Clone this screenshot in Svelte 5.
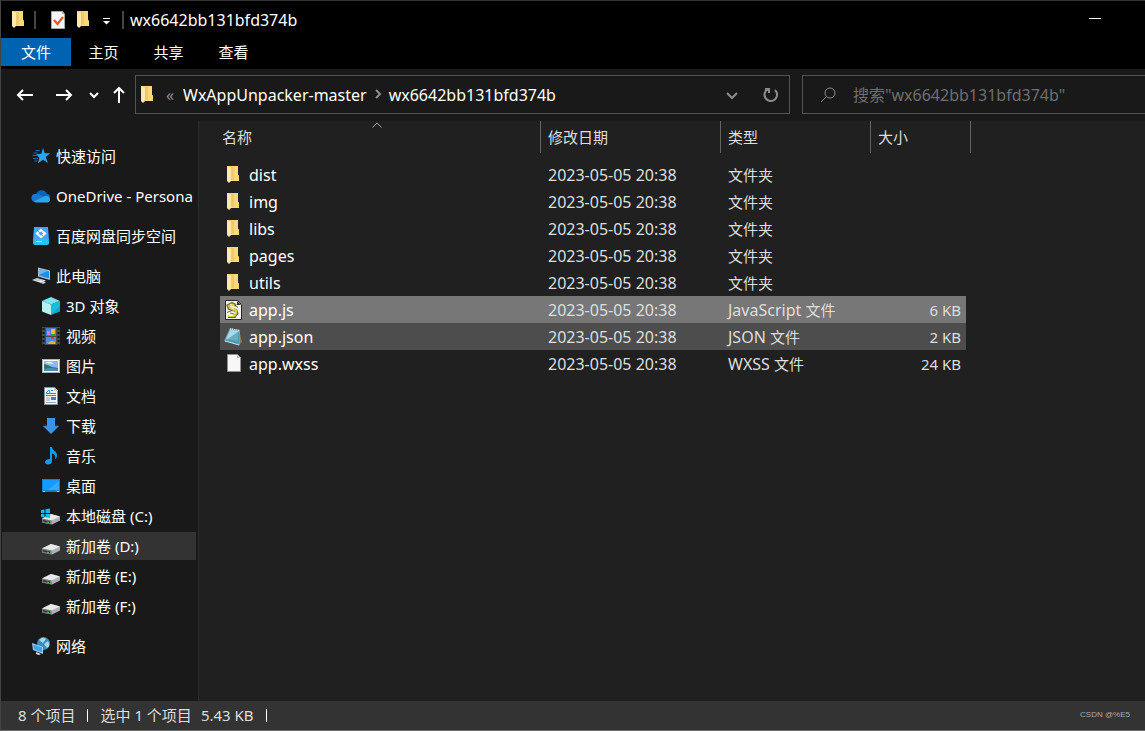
<script>
  const places = [
    { icon: 'star', label: '快速访问', top: true },
    { icon: 'cloud', label: 'OneDrive - Persona', top: true },
    { icon: 'sync', label: '百度网盘同步空间', top: true },
    { icon: 'pc', label: '此电脑', top: true },
    { icon: 'cube', label: '3D 对象' },
    { icon: 'video', label: '视频' },
    { icon: 'picture', label: '图片' },
    { icon: 'doc', label: '文档' },
    { icon: 'download', label: '下载' },
    { icon: 'music', label: '音乐' },
    { icon: 'desktop', label: '桌面' },
    { icon: 'sysdrive', label: '本地磁盘 (C:)' },
    { icon: 'drive', label: '新加卷 (D:)', active: true },
    { icon: 'drive', label: '新加卷 (E:)' },
    { icon: 'drive', label: '新加卷 (F:)' },
    { icon: 'network', label: '网络', top: true }
  ];
  const date = '2023-05-05 20:38';
  const files = [
    { icon: 'folder', name: 'dist', type: '文件夹', size: '' },
    { icon: 'folder', name: 'img', type: '文件夹', size: '' },
    { icon: 'folder', name: 'libs', type: '文件夹', size: '' },
    { icon: 'folder', name: 'pages', type: '文件夹', size: '' },
    { icon: 'folder', name: 'utils', type: '文件夹', size: '' },
    { icon: 'js', name: 'app.js', kind: 'JavaScript', type: '文件', size: '6 KB', state: 'selected' },
    { icon: 'json', name: 'app.json', kind: 'JSON', type: '文件', size: '2 KB', state: 'hover' },
    { icon: 'file', name: 'app.wxss', kind: 'WXSS', type: '文件', size: '24 KB' }
  ];
</script>

{#snippet icon(name)}
  <svg class="icon" width="20" height="20" viewBox="0 0 20 20" aria-hidden="true">
    {#if name === 'folder'}
      <path d="M4 1h11v9l1 1v5H4z" fill="#f7d571" />
      <path d="M8 1h7v9l1 1v5H8z" fill="#fbd878" />
      <path d="M8 2h3v13H8z" fill="#efca68" />
      <path d="M4 1l4 2v13l-2 2-2-2z" fill="#ffe9a6" />
    {:else if name === 'star'}
      <path d="M12 2l1.800 5.300 5.400-.100-4.500 3.700 2.300 6.100-4.900-3.200L7 17.300l1.300-5.500L5 8.200l5.300-.500z" fill="#2ba3ee" />
      <path d="M4.500 4.500h4.500M2.500 7h4M1.500 9.500h5M2 12.500h5M3.500 15h3" stroke="#1c6aa3" stroke-width="1" />
    {:else if name === 'cloud'}
      <path d="M5 8a6 6 0 0 1 11-.500 5 5 0 0 1 3.500 3L9 13z" fill="#0864b8" />
      <path d="M4 16a4 4 0 0 1 .800-8 6 6 0 0 1 5 1.300l6 5z" fill="#1479d1" />
      <path d="M3 15.500l10-5.200a4 4 0 0 1 3-.300 3.300 3.300 0 0 1 .500 6.500H4.500z" fill="#29a6ed" />
    {:else if name === 'sync'}
      <path d="M3 1h14l1 13H2z" fill="#46a4fb" />
      <rect x="2" y="13" width="16" height="6" rx="2" fill="#20c4f7" />
      <path d="M5 15.500h6" stroke="#b9f2ff" />
      <path d="M10 4l4 3.500-4 3.500-4-3.500z" fill="none" stroke="#fff" stroke-width="2.200" />
      <path d="M7 5l5 5" stroke="#46a4fb" stroke-width="1" />
    {:else if name === 'pc'}
      <path d="M7 1.500l12 3v9.500L7 10.500z" fill="#b6c2cb" />
      <path d="M8 3l10 2.500v7L8 9.500z" fill="#1c91e5" />
      <path d="M8 3l8 2-8 4z" fill="#64baf4" />
      <path d="M1 14l5-2 9 2.500-5 2.500z" fill="#e5e8eb" />
      <path d="M3 14l4-1 5 1.500M5 15l4-1" fill="none" stroke="#9ca5ac" stroke-width=".7" />
      <path d="M10 17l3-1.500 2 1-3 1.500z" fill="#cdd2d6" />
    {:else if name === 'cube'}
      <path d="M10 1l9 4-9 3.500L1 5z" fill="#7be4ef" />
      <path d="M1 5l9 3.500V19l-9-3.500z" fill="#b9eff3" />
      <path d="M10 8.500L19 5v10.500L10 19z" fill="#06a9ca" />
      <path d="M10 8.500L19 5v5l-9 9z" fill="#19bdd8" />
    {:else if name === 'video'}
      <rect x="1" y="1" width="18" height="18" fill="#4a4a4a" />
      <path d="M2.500 2v17M17.500 2v17" stroke="#151515" stroke-width="2" stroke-dasharray="2 2" />
      <rect x="5" y="2" width="10" height="8" fill="#477edb" />
      <rect x="5" y="11" width="10" height="7" fill="#4b8cea" />
      <rect x="6" y="5" width="3" height="4" fill="#d57cc4" />
      <rect x="10" y="3" width="4" height="5" fill="#edbf22" />
      <path d="M5 9h4v1H5z" fill="#df522d" /><path d="M10 8h4v2h-4z" fill="#379948" />
      <path d="M10 11h3v2h-3z" fill="#d94329" /><path d="M8 16l3-1 3 1v2H7z" fill="#e5b432" />
    {:else if name === 'picture'}
      <rect x="1" y="3" width="18" height="14" fill="#aeb2b5" />
      <rect x="2" y="4" width="16" height="12" fill="#fff" />
      <rect x="3" y="5" width="14" height="10" fill="#86baf0" />
      <path d="M4 7q5-3 9 1z" fill="#edf6fa" />
      <path d="M3 8q4 1 8 3l6 1v3H3z" fill="#356f70" />
      <path d="M3 13q7-2 14 0v2H3z" fill="#518caf" />
    {:else if name === 'doc'}
      <path d="M3.500 1.500h10l3 3v14h-13z" fill="#f4f5f6" stroke="#8d9194" />
      <path d="M13 1v4h4z" fill="#c7cbce" />
      <path d="M5 7l3-3 1 3M10 4.500h2" fill="none" stroke="#188dda" />
      <path d="M5 7.500h10M5 9.500h10" fill="none" stroke="#188dda" />
      <path d="M5 12h4M5 14h4M5 16.500h10" stroke="#8fa9ba" />
      <rect x="10" y="11" width="5" height="3" fill="#3c86b6" />
    {:else if name === 'download'}
      <path d="M6 2h8v8h4l-8 8-8-8h4z" fill="#3994e6" />
      <path d="M2.500 10H6v-.500M14 10h3.500" stroke="#1e72bc" />
    {:else if name === 'music'}
      <path d="M9 1h2c.500 4 5 4 5 8 0 2-1 4-2 4 1-4-1-5-3-5.500v7c0 3-2 4-4 4s-3-1-3-2.500S6 13 9 13z" fill="#0c9bf5" />
    {:else if name === 'desktop'}
      <rect x="1" y="3" width="18" height="13" fill="#0c80d8" />
      <path d="M2 4h16v10H2z" fill="#159aff" /><path d="M7 14L18 5v9z" fill="#36aaff" />
      <path d="M2 15.500h2M16 15.500h2" stroke="#9bd8ff" />
    {:else if name === 'drive' || name === 'sysdrive'}
      <path d="M1 12.500L10 8l9 2.500v4l-8 4-10-2z" fill="#abb0b4" />
      <path d="M1 12.500L10 8l9 2.500-8.500 4z" fill="#e7e9eb" />
      <path d="M1 12.500l9.500 2v4L1 16.500z" fill="#73787b" />
      <path d="M2 14l7 1.500v1.500L2 15.500z" fill="#303336" />
      <path d="M6 15.500l2 .500v1l-2-.500z" fill="#2fd236" />
      {#if name === 'sysdrive'}
        <path d="M0 4l3.500-.500V7H0zM4.500 3.200L9 2.500V7H4.500zM0 8h3.500v3.500L0 11zM4.500 8H9v4l-4.500-.500z" fill="#19b9f5" />
      {/if}
    {:else if name === 'network'}
      <circle cx="12.500" cy="7.500" r="6.500" fill="#3c8bb9" />
      <path d="M8 4q4-4 7-1l-3 4zM13 8l4-3q3 5-1 7z" fill="#a7d9e9" />
      <path d="M1 7l11 4v7L2 14z" fill="#9fd4f5" />
      <path d="M2 8.500l9 3v5l-8-3z" fill="#37a7f0" />
      <path d="M5 16l5 2-2 1-3-1z" fill="#dce2e5" />
    {:else if name === 'js'}
      <path d="M2.500.500h12l4 4v15h-16z" fill="#f5f5ef" stroke="#292929" />
      <path d="M14 1v4h4z" fill="#333" />
      <path d="M13 5.500l-4-2-4 2 1 3 7 2 1 3-3 3H5" fill="none" stroke="#77733c" stroke-width="3" />
      <path d="M12 5.500l-3-1-3 1.500 1 2 6 2.500v3l-2 2.500H5" fill="none" stroke="#ddd04a" stroke-width="2" />
      <path d="M11 4.500l4 3M4 12.500l5-2M7 13l4 1M5 17.500h8" stroke="#4c4c43" stroke-width=".8" />
      <path d="M7 4l2 1M8 8l3 1M6 15.500h4" stroke="#fffbb0" />
    {:else if name === 'json'}
      <path d="M16 3l3 12-3 3z" fill="#8e7753" />
      <path d="M7 1l10 2v15L1 14z" fill="#5fa5ba" />
      <path d="M7 3l9 1-1.500 10L3 12z" fill="#a4dce6" />
      <path d="M9 9l7-5v13L2 14z" fill="#4594ad" opacity=".65" />
      <path d="M2 14l14 4" stroke="#d4e4e8" />
      <path d="M7 2l9 1.500" stroke="#dce9ec" stroke-width="1.500" stroke-dasharray="1 1" />
    {:else if name === 'file'}
      <path d="M4.500.500h10l3 3v14h-13z" fill="#f7f7f7" stroke="#909090" />
      <path d="M14 1v3h3z" fill="#bbb" />
    {:else if name === 'check'}
      <path d="M3.500 1.500h11l2 3v14h-13z" fill="#f5f5f5" stroke="#a9a9a9" />
      <path d="M14 1v3h3z" fill="#aaa" />
      <path d="M6 10l3.500 4L15 7" fill="none" stroke="#e9581f" stroke-width="2.200" />
    {:else if name === 'back'}
      <path d="M18 10H3M8 5l-5 5 5 5" class="line" />
    {:else if name === 'forward'}
      <path d="M2 10h15M12 5l5 5-5 5" class="line" />
    {:else if name === 'up'}
      <path d="M10 18V3M5 8l5-5 5 5" class="line" />
    {:else if name === 'down'}
      <path d="M6 8l4 4 4-4" class="line" />
    {:else if name === 'chevron'}
      <path d="M5 8l5 5 5-5" class="line" />
    {:else if name === 'right'}
      <path d="M8 5l4 4-4 4" class="line" />
    {:else if name === 'refresh'}
      <path d="M14 5a6.300 6.300 0 1 1-7-1M4 4h4v4" class="line" />
    {:else if name === 'search'}
      <circle cx="12" cy="8" r="5" fill="none" stroke="currentColor" /><path d="M8.500 11.500L3 17" stroke="currentColor" />
    {:else if name === 'more'}
      <path d="M7 8.500h7" stroke="currentColor" /><path d="M7 11h7l-3.500 3.500z" fill="currentColor" />
    {:else if name === 'minimize'}
      <path d="M4 8.500h12" stroke="currentColor" />
    {/if}
  </svg>
{/snippet}

<div class="window">
  <header class="title">
    {@render icon('folder')}
    <i class="rule"></i>
    <button aria-label="属性">{@render icon('check')}</button>
    <button aria-label="新建文件夹">{@render icon('folder')}</button>
    <button aria-label="自定义快速访问工具栏">{@render icon('more')}</button>
    <i class="rule"></i>
    <h1>wx6642bb131bfd374b</h1>
    <button class="minimize" aria-label="最小化">{@render icon('minimize')}</button>
  </header>

  <nav class="tabs">
    <button class="primary">文件</button>
    <button>主页</button>
    <button>共享</button>
    <button>查看</button>
  </nav>

  <div class="toolbar">
    <div class="history">
      <button aria-label="返回">{@render icon('back')}</button>
      <button aria-label="前进">{@render icon('forward')}</button>
      <button class="slim" aria-label="最近浏览的位置">{@render icon('down')}</button>
      <button class="slim" aria-label="上移">{@render icon('up')}</button>
    </div>
    <div class="address">
      {@render icon('folder')}
      <span class="dim skip">«</span>
      <button>WxAppUnpacker-master</button>
      <span class="dim next">{@render icon('right')}</span>
      <button>wx6642bb131bfd374b</button>
      <button class="dim drop" aria-label="以前的位置">{@render icon('chevron')}</button>
      <button class="dim refresh" aria-label="刷新">{@render icon('refresh')}</button>
    </div>
    <label class="search">
      {@render icon('search')}
      <input type="search" aria-label="搜索" placeholder={'搜索"wx6642bb131bfd374b"'} />
    </label>
  </div>

  <div class="body">
    <aside>
      {#each places as place}
        <a href="#place" class:top={place.top} class:active={place.active}>
          {@render icon(place.icon)}<span>{place.label}</span>
        </a>
      {/each}
    </aside>
    <main>
      <table>
        <colgroup>
          <col class="c-name" /><col class="c-date" /><col class="c-type" /><col class="c-size" /><col class="c-end" />
        </colgroup>
        <thead>
          <tr>
            <th>
              名称
              <svg class="sort" width="10" height="6" viewBox="0 0 10 6" aria-hidden="true"><path d="M.500 5.500L5 1l4.500 4.500" fill="none" stroke="#aaa" /></svg>
            </th>
            <th>修改日期</th>
            <th>类型</th>
            <th colspan="2">大小</th>
          </tr>
        </thead>
        <tbody>
          {#each files as file}
            <tr class={file.state}>
              <td class="name"><div>{@render icon(file.icon)}<span>{file.name}</span></div></td>
              <td class="date">{date}</td>
              <td>{#if file.kind}<span class="kind">{file.kind + ' '}</span>{/if}{file.type}</td>
              <td class="size">{file.size}</td>
              <td class="end"></td>
            </tr>
          {/each}
        </tbody>
      </table>
    </main>
  </div>

  <footer>
    <span>8 个项目</span>
    <i></i>
    <span>选中 1 个项目</span>
    <span class="bytes">5.43 KB</span>
    <i></i>
    <small>CSDN @%E5</small>
  </footer>
</div>

<style>
  :global(body) { background: #202020; }
  .window {
    box-sizing: border-box;
    min-height: 100vh;
    display: flex;
    flex-direction: column;
    border: 1px solid #6b6b6b;
    border-top-color: #333;
    border-left-color: #444;
    border-right: 0;
    background: #202020;
    color: #fff;
    font: 15px/20px "Noto Sans", "Noto Sans CJK SC", sans-serif;
    overflow: hidden;
  }
  button {
    padding: 0;
    border: 0;
    background: none;
    color: inherit;
    font: inherit;
    display: flex;
    align-items: center;
  }
  .icon { display: block; flex: none; }
  .line { fill: none; stroke: currentColor; stroke-width: 2; }

  .title {
    height: 37px;
    display: flex;
    align-items: center;
    padding-left: 7px;
    background: #000;
  }
  .rule { width: 2px; height: 18px; background: #444; margin: 0 6px; }
  .title .icon + .rule { margin-right: 12px; }
  .title button + button { margin-left: 5px; }
  .title button + button + button { margin-left: 3px; }
  h1 { margin: 0; font-size: 16px; font-weight: 400; }
  .title .minimize { margin: 0 40px 0 auto; }

  .tabs { display: flex; background: #000; padding-bottom: 3px; }
  .tabs button { height: 28px; width: 65px; justify-content: center; }
  .tabs .primary { width: 70px; background: #0063b1; }

  .toolbar {
    display: flex;
    padding: 6px 0 7px;
    background: #191919;
  }
  .history { display: flex; width: 134px; gap: 19px; padding-left: 14px; box-sizing: border-box; }
  .history .slim { margin-left: -9px; }
  .history .slim + .slim { margin-left: -14px; }
  .address, .search {
    box-sizing: border-box;
    height: 39px;
    border: 1px solid #535353;
    display: flex;
    align-items: center;
    font-size: 16px;
  }
  .address { flex: 1; min-width: 0; padding-left: 1px; }
  .dim { color: #8d8d8d; }
  .skip { width: 26px; text-align: center; }
  .next { width: 22px; display: flex; justify-content: center; }
  .drop { margin-left: auto; }
  .refresh { margin: 0 8px 0 19px; }
  .search { width: 343px; margin-left: 12px; border-right: 0; padding-left: 15px; gap: 15px; color: #888; }
  .search input {
    flex: 1;
    min-width: 0;
    padding: 0;
    border: 0;
    outline: 0;
    background: none;
    color: #fff;
    font: inherit;
  }
  .search input::placeholder { color: #6f6f6f; opacity: 1; }

  .body { flex: 1; display: flex; }
  aside {
    box-sizing: border-box;
    width: 198px;
    padding: 10px 2px 0 1px;
    border-right: 1px solid #2c2c2c;
    background: #191919;
  }
  aside a {
    display: flex;
    align-items: center;
    gap: 5px;
    height: 28px;
    margin-top: 2px;
    padding-left: 39px;
    color: #fff;
    text-decoration: none;
    white-space: nowrap;
  }
  aside a.top { margin-top: 12px; padding-left: 29px; }
  aside a.top:first-child { margin-top: 11px; }
  aside .active { background: #333; }

  main { flex: 1; min-width: 0; padding-left: 21px; }
  table { table-layout: fixed; width: 751px; border-collapse: separate; border-spacing: 0; }
  .c-name { width: 321px; }
  .c-date { width: 180px; }
  .c-type { width: 150px; }
  .c-size { width: 95px; }
  .c-end { width: 5px; }
  th {
    position: relative;
    box-sizing: border-box;
    height: 32px;
    padding: 0 0 0 7px;
    border-right: 1px solid #636363;
    color: #dedede;
    font-weight: 400;
    text-align: left;
  }
  th:first-child { padding-left: 2px; }
  .sort { position: absolute; left: 152px; top: 1px; }
  tbody::before { content: ""; display: block; height: 8px; }
  td { height: 27px; padding: 0 0 0 7px; color: #dedede; }
  td.name { padding-left: 3px; color: #fff; font-size: 16px; }
  .name div { display: flex; align-items: center; gap: 6px; }
  .date, .kind { font-size: 16px; }
  td.size { padding: 0 5px 0 0; text-align: right; }
  .selected td:not(.end) { background: #777; }
  .hover td:not(.end) { background: #4d4d4d; }

  footer {
    height: 28px;
    padding: 0 0 1px 17px;
    display: flex;
    align-items: center;
    background: #333;
    color: #dedede;
  }
  footer i { width: 1px; height: 13px; margin: 0 12px; background: #fff; }
  .bytes { margin-left: 9px; }
  small { margin: 0 15px 0 auto; color: #aaa; font: 8px/12px "Liberation Sans", sans-serif; }
</style>
